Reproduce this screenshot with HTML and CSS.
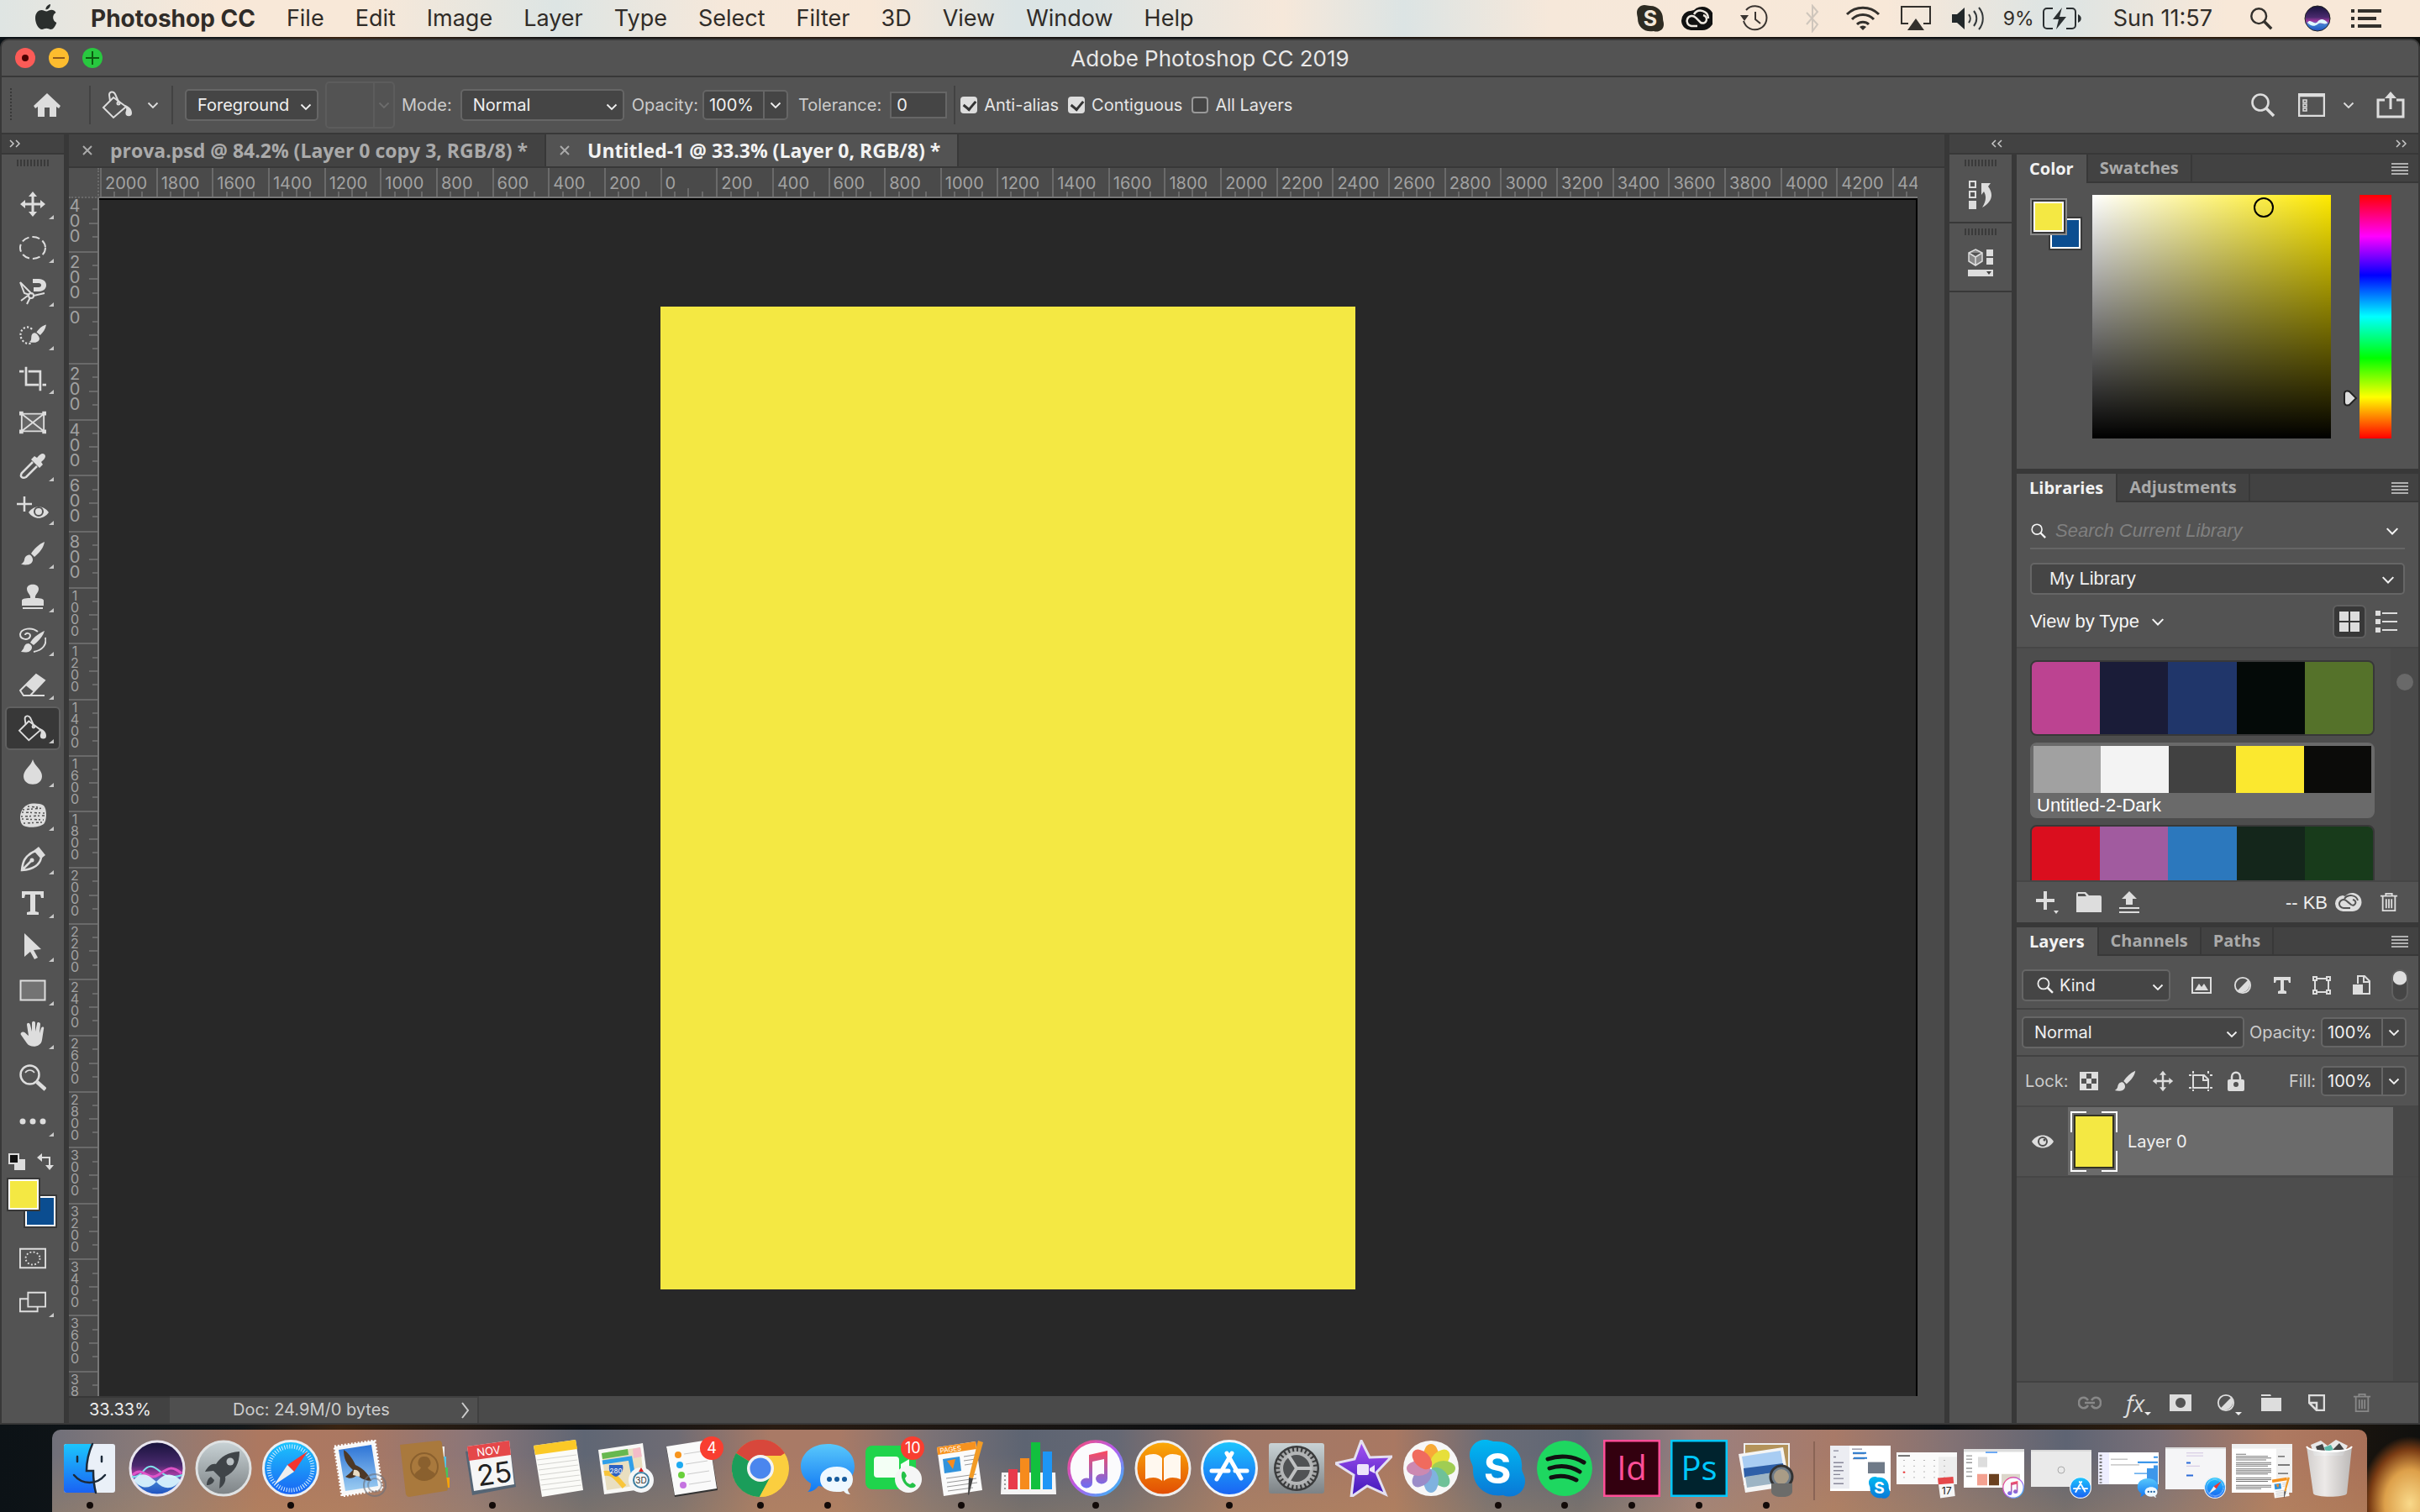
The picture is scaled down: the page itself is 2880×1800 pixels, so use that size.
FILE: index.html
```html
<!DOCTYPE html>
<html lang="en">
<head>
<meta charset="utf-8">
<title>Adobe Photoshop CC 2019</title>
<link rel="stylesheet" href="styles.css">
</head>
<body>
<svg class="sprite" aria-hidden="true">
  <defs>
    <linearGradient id="g-blue" x1="0" y1="0" x2="0" y2="1"><stop offset="0" stop-color="#1cc6fd"/><stop offset="1" stop-color="#1a62f3"/></linearGradient>
    <linearGradient id="g-bubble" x1="0" y1="0" x2="0" y2="1"><stop offset="0" stop-color="#59c8fb"/><stop offset="1" stop-color="#1279f4"/></linearGradient>
    <linearGradient id="g-orange" x1="0" y1="0" x2="0" y2="1"><stop offset="0" stop-color="#fbab08"/><stop offset="1" stop-color="#e14c04"/></linearGradient>
    <linearGradient id="g-silver" x1="0" y1="0" x2="0" y2="1"><stop offset="0" stop-color="#c9d3d6"/><stop offset="1" stop-color="#7d8285"/></linearGradient>
    <linearGradient id="g-pink" x1="0" y1="0" x2="1" y2="1"><stop offset="0" stop-color="#fb4a6c"/><stop offset=".5" stop-color="#b45cf0"/><stop offset="1" stop-color="#23c5f7"/></linearGradient>
    <linearGradient id="g-note" x1="0" y1="0" x2="0" y2="1"><stop offset="0" stop-color="#fb4a5e"/><stop offset="1" stop-color="#6b6df6"/></linearGradient>
    <linearGradient id="g-star" x1="0" y1="0" x2="0" y2="1"><stop offset="0" stop-color="#a855f5"/><stop offset="1" stop-color="#3d16b8"/></linearGradient>
    <linearGradient id="g-sky" x1="0" y1="0" x2="0" y2="1"><stop offset="0" stop-color="#2d74d6"/><stop offset="1" stop-color="#9ccdf2"/></linearGradient>
    <linearGradient id="g-skype" x1="0" y1="0" x2="0" y2="1"><stop offset="0" stop-color="#00b9f2"/><stop offset="1" stop-color="#0a78d6"/></linearGradient>
    <linearGradient id="g-bin" x1="0" y1="0" x2="1" y2="0"><stop offset="0" stop-color="#d4d4d4"/><stop offset=".4" stop-color="#f1f1f1"/><stop offset="1" stop-color="#bdbdbd"/></linearGradient>
    <linearGradient id="g-night" x1="0" y1="0" x2="0" y2="1"><stop offset="0" stop-color="#16123a"/><stop offset=".45" stop-color="#4a2a6e"/><stop offset=".6" stop-color="#a0389e"/><stop offset=".75" stop-color="#3f7fd0"/><stop offset="1" stop-color="#1d4fc0"/></linearGradient>
  </defs>
  <symbol id="chev" viewBox="0 0 14 14"><path d="M1.500 4.500 7 10l5.500-5.500" fill="none" stroke="currentColor" stroke-width="1.800"/></symbol>
  <symbol id="lens" viewBox="0 0 32 32"><circle cx="13" cy="13" r="9.500" fill="none" stroke="currentColor" stroke-width="2.600"/><path d="m20 20 9 9" stroke="currentColor" stroke-width="3.600"/></symbol>
  <symbol id="burger" viewBox="0 0 20 14"><path d="M0 1h20M0 5h20M0 9h20M0 13h20" stroke="currentColor" stroke-width="2"/></symbol>
  <symbol id="bin" viewBox="0 0 24 26"><path d="M1 5h22M8 5V2h8v3M4 6v18h16V6M8.500 9v12M12 9v12M15.500 9v12" fill="none" stroke="currentColor" stroke-width="2"/></symbol>
  <symbol id="move" viewBox="0 0 32 32"><path d="M16 1l5 6h-3.500v7.500H25V11l6 5-6 5v-3.500h-7.500V25H21l-5 6-5-6h3.500v-7.500H7V21l-6-5 6-5v3.500h7.500V7H11z" fill="currentColor"/></symbol>
  <symbol id="brush" viewBox="0 0 32 32"><path d="M30 2c-7 3-12 8-16 14l4 4C24 15 29 9 30 2zM12.500 17.500c-4 0-6 2.500-6.500 6-.4 2.500-2 4-4 5 6 2 13 1 14-4.500 .3-2-1-5.500-3.500-6.500z" fill="currentColor"/></symbol>
  <symbol id="bucket" viewBox="0 0 38 34"><g fill="none" stroke="currentColor" stroke-width="2"><path d="m14 8 15 11-15 13L2 20z"/><path d="M10 12 9 5c0-4 5-5 7-1l4 9"/><circle cx="20" cy="15" r="1.500"/></g><path d="M28 17c5 2 8 5 8 9.500a3.800 3.800 0 0 1-7.600 0c0-2 2-3.500 0-7z" fill="currentColor"/></symbol>
  <symbol id="half" viewBox="0 0 24 24"><circle cx="12" cy="12" r="10" fill="none" stroke="currentColor" stroke-width="2"/><path d="M19 5a10 10 0 0 1-14 14z" fill="currentColor"/></symbol>
  <symbol id="cloud" viewBox="0 0 34 24"><path d="M11 4a9 9 0 1 0 1 19h11A11 11 0 1 0 14 5z" fill="currentColor"/><g fill="none" stroke="#535353" stroke-width="2"><path d="M20 19h-8a5 5 0 1 1 3-9l6 5c5 3 8-5 2-6"/><path d="M13 8c4-6 14-5 16 2"/></g></symbol>
  <symbol id="grip" viewBox="0 0 38 8"><path d="M1 0v8M5 0v8M9 0v8M13 0v8M17 0v8M21 0v8M25 0v8M29 0v8M33 0v8M37 0v8" stroke="#3a3a3a" stroke-width="2"/></symbol>
  <symbol id="app-store" viewBox="0 0 68 68"><circle cx="34" cy="34" r="32.500" fill="url(#g-blue)" stroke="#f0f4f8" stroke-width="3"/><g stroke="#fff" stroke-linecap="round" stroke-width="5"><path d="M31 16l17 30M37 16 19 47M13 37h20M41 37h14" /></g></symbol>
  <symbol id="safari" viewBox="0 0 68 68"><circle cx="34" cy="34" r="32.500" fill="url(#g-blue)" stroke="#eceff2" stroke-width="3"/><circle cx="34" cy="34" r="26" fill="none" stroke="#d5efff" stroke-width="5" stroke-dasharray="1 2"/><path d="M54 14 38 38l-8-8z" fill="#f5352f"/><path d="M14 54l16-24 8 8z" fill="#eee"/></symbol>
  <symbol id="itunes" viewBox="0 0 68 68"><circle cx="34" cy="34" r="32" fill="#fbfbfd" stroke="url(#g-pink)" stroke-width="3.500"/><path d="M26 18l22-5v33a7 6 0 1 1-4-5V23l-14 3v25a7 6 0 1 1-4-5z" fill="url(#g-note)"/></symbol>
  <symbol id="messages" viewBox="0 0 68 68"><path d="M34 5C16 5 2 16 2 32c0 9 5 16 12 20 0 5-1 8-4 10 6 0 10-3 13-7 24 5 43-6 43-23S52 5 34 5z" fill="url(#g-bubble)"/><path d="M45 32c-12 0-20 6-20 15s8 15 20 15c3 0 6 0 8-1 2 3 5 4 8 4-2-2-3-4-3-6 4-3 6-7 6-12 0-9-8-15-19-15z" fill="#eef8ff"/><g fill="#155a9c"><circle cx="36" cy="47" r="3"/><circle cx="45" cy="47" r="3"/><circle cx="54" cy="47" r="3"/></g></symbol>
  <symbol id="skype" viewBox="0 0 68 68"><path d="M18 0c6 0 8 2 12 2 20-1 34 14 32 32 0 5 4 8 4 15 0 15-15 22-26 17C20 69 3 56 4 34 4 29 0 26 0 18 0 8 8 0 18 0z" fill="url(#g-skype)"/></symbol>
  <symbol id="pages" viewBox="0 0 68 68"><path d="M5 9 51 2l8 58-46 7z" fill="#fbfbfb"/><path d="M5 9 51 2l1 9-46 7z" fill="#f6921e"/><path d="m12 23 20-3 2 17-20 3z" fill="#3293dc"/><path d="m17 25 10-2-3 12z" fill="#f68b1f"/><path d="m37 20 13-2M37 25l14-2M38 30l13-2M16 46l36-5M17 51l35-5M17 56l36-5M18 61l30-4" stroke="#999"/><path d="M54 1l6 2-12 43-5-1z" fill="#f29b25"/><path d="m43 45 5 1-5 20-1-1z" fill="#444"/></symbol>
</svg>

<header class="menubar">
  <svg class="apple" viewBox="0 0 26 32"><path d="M18 1c.3 3-2.500 6.500-5.500 6.500C12 4.500 15 1.300 18 1zM24.500 11c-5 3-4 10 .8 12-1.600 4.500-4 8-6.800 8-2 0-3-1.200-5.200-1.200S9.800 31 8 31C4 31 0 24 0 17.500 0 11 4 8 7.500 8c2.300 0 4.200 1.500 5.700 1.500S17 7.800 19.500 7.800c1.800 0 3.800 1 5 3.200z" fill="#2b2f2d"/></svg>
  <nav class="menus">
    <a href="#" class="app-name">Photoshop CC</a><a href="#">File</a><a href="#">Edit</a><a href="#">Image</a><a href="#">Layer</a><a href="#">Type</a><a href="#">Select</a><a href="#">Filter</a><a href="#">3D</a><a href="#">View</a><a href="#">Window</a><a href="#">Help</a>
  </nav>
  <div class="status">
    <svg width="32" height="32" viewBox="0 0 32 32"><path d="M9 0c3 0 4 1 7 1 9 0 15 7 15 15 0 3 1 4 1 7 0 7-7 10-12 8C9 33 1 26 1 16 1 14 0 12 0 9c0-5 4-9 9-9z" fill="#2e2b22"/><text x="16" y="25" text-anchor="middle" font-family="Inter, sans-serif" font-size="25" font-weight="700" fill="#f4e8da">S</text></svg>
    <svg class="cc" width="38" height="30" viewBox="0 0 38 30"><path d="M12 6a11 11 0 1 0 1 23h12A14 14 0 1 0 16 5z" fill="#111"/><g fill="none" stroke="#eee8e0" stroke-width="2.500"><path d="M20 24h-7a6 6 0 1 1 5-10l6 6c7 3 10-7 3-9"/><path d="M16 10c5-8 17-4 17 5"/></g></svg>
    <svg width="36" height="34" viewBox="0 0 36 34"><path d="M5 20A14 14 0 1 0 8 7M19 9v9l6 5" fill="none" stroke="#3a3430" stroke-width="2"/><path d="M1 13h10l-5 7z" fill="#3a3430"/></svg>
    <svg class="bt" width="18" height="34" viewBox="0 0 18 34"><path d="M2 10l13 14-6 8V2l6 7L2 24" fill="none" stroke="#cfc6bc" stroke-width="2"/></svg>
    <svg width="42" height="30" viewBox="0 0 42 30"><g fill="none" stroke="#33302c" stroke-width="3"><path d="M2 10a27 27 0 0 1 38 0M8 16a18 18 0 0 1 26 0M14 22a10 10 0 0 1 14 0"/></g><path d="M21 29l-4-4a6 6 0 0 1 8 0z" fill="#33302c"/></svg>
    <svg width="36" height="30" viewBox="0 0 36 30"><path d="M9 21H1V1h34v20h-8" fill="none" stroke="#33302c" stroke-width="2"/><path d="M18 15l10 14H8z" fill="#33302c"/></svg>
    <svg width="42" height="32" viewBox="0 0 42 32"><path d="M1 11h6l9-8v26l-9-8H1z" fill="#22282a"/><g fill="none" stroke="#33383a" stroke-width="2"><path d="M21 11a8 8 0 0 1 0 10M27 7a14 14 0 0 1 0 18M33 3a20 20 0 0 1 0 26"/></g></svg>
    <span class="pct">9%</span>
    <svg width="46" height="26" viewBox="0 0 46 26"><path d="M12 1H5a4 4 0 0 0-4 4v16a4 4 0 0 0 4 4h7M28 1h7a4 4 0 0 1 4 4v16a4 4 0 0 1-4 4h-7" fill="none" stroke="#2b3032" stroke-width="2"/><path d="M42 8c5 2 5 8 0 10zM23 0 12 14h7l-3 12 12-15h-8z" fill="#2b3032"/></svg>
    <span class="clock">Sun 11:57</span>
    <svg width="30" height="30"><use href="#lens" color="#33302c"/></svg>
    <svg class="siri-mini" width="32" height="32" viewBox="0 0 32 32"><circle cx="16" cy="16" r="15" fill="url(#g-night)" stroke="#222"/><path d="M4 21c4-6 8 4 12-1s8-3 12 1c-4 4-7-2-12 2-4 3-8 2-12-2z" fill="#e0f8ff"/></svg>
    <svg width="36" height="24" viewBox="0 0 36 24"><path d="M0 3h4M8 3h28M0 12h4M8 12h22M0 21h4M8 21h28" stroke="#33302c" stroke-width="4"/></svg>
  </div>
</header>

<main class="window">
  <div class="titlebar">
    <div class="lights">
      <button class="light close" aria-label="Close"><svg viewBox="0 0 24 24"><circle cx="12" cy="12" r="4" fill="#4d0000"/></svg></button>
      <button class="light min" aria-label="Minimise"><svg viewBox="0 0 24 24"><path d="M5 12h14" stroke="#8f591d" stroke-width="2"/></svg></button>
      <button class="light max" aria-label="Zoom"><svg viewBox="0 0 24 24"><path d="M4 12h16M12 4v16" stroke="#0b5c10" stroke-width="2"/></svg></button>
    </div>
    <h1>Adobe Photoshop CC 2019</h1>
  </div>

  <div class="options">
    <i class="dots"></i>
    <button class="ico home" aria-label="Home"><svg width="32" height="28" viewBox="0 0 32 28"><path d="M16 0l16 15-2 3-3-2v12h-8V17h-6v11H5V16l-3 2-2-3z" fill="currentColor"/></svg></button>
    <i class="rule"></i>
    <button class="ico tool-preset" aria-label="Paint bucket preset"><svg width="38" height="34"><use href="#bucket"/></svg><svg width="14" height="14"><use href="#chev"/></svg></button>
    <i class="rule"></i>
    <span class="pick w-fore"><select aria-label="Fill source"><option>Foreground</option></select><svg><use href="#chev"/></svg></span>
    <span class="pattern"><i></i><svg width="14" height="14"><use href="#chev"/></svg></span>
    <label for="mode">Mode:</label>
    <span class="pick w-mode"><select id="mode"><option>Normal</option></select><svg><use href="#chev"/></svg></span>
    <label for="op">Opacity:</label>
    <span class="combo"><input id="op" value="100%"><button aria-label="Opacity slider"><svg width="14" height="14"><use href="#chev"/></svg></button></span>
    <label for="tol" class="tol-label">Tolerance:</label>
    <input id="tol" class="tol" value="0">
    <i class="rule slim"></i>
    <label class="check"><input type="checkbox" checked>Anti-alias</label>
    <label class="check"><input type="checkbox" checked>Contiguous</label>
    <label class="check"><input type="checkbox">All Layers</label>
    <div class="options-end">
      <button class="ico" aria-label="Search"><svg width="32" height="32"><use href="#lens"/></svg></button>
      <button class="ico ws" aria-label="Workspace"><svg width="32" height="28" viewBox="0 0 32 28"><path d="M1 1h30v26H1zM1 3h30" fill="none" stroke="currentColor" stroke-width="2.500"/><path d="M6 8h4v3H6zM6 13h4v3H6zM6 18h4v3H6z" fill="none" stroke="currentColor" stroke-width="1.500"/></svg><svg width="14" height="14"><use href="#chev"/></svg></button>
      <button class="ico" aria-label="Share"><svg width="34" height="32" viewBox="0 0 34 32"><path d="M10 10H2v20h30V10h-8M17 21V5" fill="none" stroke="currentColor" stroke-width="3"/><path d="M17 0l7 8H10z" fill="currentColor"/></svg></button>
    </div>
  </div>

  <div class="work">
    <aside class="toolbox">
      <div class="strip-head"><svg width="14" height="10" viewBox="0 0 14 10"><path d="M1 1l4 4-4 4M8 1l4 4-4 4" fill="none" stroke="#c8c8c8" stroke-width="1.500"/></svg></div>
      <svg class="tool-grip" width="38" height="8"><use href="#grip"/></svg>
      <div class="tools">
        <button class="tool more" aria-label="Move"><svg width="30" height="30"><use href="#move"/></svg></button>
        <button class="tool more" aria-label="Marquee"><svg viewBox="0 0 32 32"><ellipse cx="16" cy="16" rx="15" ry="13" fill="none" stroke="currentColor" stroke-width="2" stroke-dasharray="9 4"/></svg></button>
        <button class="tool more" aria-label="Lasso"><svg viewBox="0 0 32 32"><path d="M1 5l14 14M1 5l5 13 6 2M30 18l-13 3M13 23l-4 8M10 21l-8 6" fill="none" stroke="currentColor" stroke-width="2"/><circle cx="14" cy="21" r="3" fill="none" stroke="currentColor" stroke-width="2"/><path d="M16 1h7c12 0 12 15 0 15h-6v-5h6c4 0 4-5 0-5h-7z" fill="currentColor"/></svg></button>
        <button class="tool more" aria-label="Quick selection"><svg viewBox="0 0 36 32"><path d="M17 8C8 0-2 11 3 21c3 6 10 8 14 5" fill="none" stroke="currentColor" stroke-width="2.500" stroke-dasharray="2.500 2.500"/><path d="M36 2c-5 1-9 5-13 10l5 4c4-4 7-8 8-14zM21 13c-3 0-5 2-5 6 0 4-1 5-3 6 6 2 13 1 14-4 0-3-3-7-6-8z" fill="currentColor"/></svg></button>
        <button class="tool more" aria-label="Crop"><svg viewBox="0 0 36 32"><path d="M9 0v24h17M0 6h6M12 6h16v26M31 24h5" fill="none" stroke="currentColor" stroke-width="3"/></svg></button>
        <button class="tool" aria-label="Frame"><svg viewBox="0 0 34 28"><path d="M3 3h28v22H3zM3 3l28 22M31 3 3 25" fill="#666" stroke="currentColor" stroke-width="2"/><path d="M0 0h5v5H0zM29 0h5v5h-5zM0 23h5v5H0zM29 23h5v5h-5z" fill="currentColor"/></svg></button>
        <button class="tool more" aria-label="Eyedropper"><svg viewBox="0 0 32 32"><path d="M18 4l3 2c4-5 7-6 9-4s1 5-4 9l2 3-4 4-10-10z" fill="currentColor"/><path d="M16 11 3 24c-3 5 1 7 5 5l13-13" fill="none" stroke="currentColor" stroke-width="2.500"/></svg></button>
        <button class="tool more" aria-label="Red eye"><svg class="wide" viewBox="0 0 38 32"><path d="M0 9h18M9 0v18" stroke="currentColor" stroke-width="2.500"/><path d="M14 19c6-9 18-9 24 0-6 9-18 9-24 0z" fill="currentColor"/><circle cx="26" cy="18" r="5" fill="none" stroke="#535353" stroke-width="2"/></svg></button>
        <button class="tool more" aria-label="Brush"><svg><use href="#brush"/></svg></button>
        <button class="tool more" aria-label="Stamp"><svg viewBox="0 0 32 32"><path d="M3 26v-6c0-2 3-3 10-3 1-4-4-6-4-11 0-7 14-7 14 0 0 5-5 7-4 11 7 0 10 1 10 3v6zM4 28h24v2H4z" fill="currentColor"/></svg></button>
        <button class="tool more" aria-label="History brush"><svg viewBox="0 0 32 32"><path d="M30 4C24 7 17 11 13 18l4 3C23 16 28 11 30 4zM11 19c-4 0-5 3-6 6l-3 4c6 1 12 1 13-5 0-2-1-4-4-5z" fill="currentColor"/><path d="M22 5C15-1 2 1 1 8c0 7 11 8 12 2 0-4-6-4-6-1M31 12c2 8-3 15-14 17" fill="none" stroke="currentColor" stroke-width="2"/></svg></button>
        <button class="tool more" aria-label="Eraser"><svg viewBox="0 0 32 32"><path d="M1 23 20 4l10 7-17 18H5zM8 16l10 8" fill="none" stroke="currentColor" stroke-width="2"/><path d="M20 4l10 7-12 13L8 16zM6 28h24v2H6z" fill="currentColor"/></svg></button>
        <button class="tool more on" aria-label="Paint bucket"><svg class="wide" viewBox="0 0 38 34"><use href="#bucket"/></svg></button>
        <button class="tool more" aria-label="Blur"><svg viewBox="0 0 32 32"><path d="M16 1c2 8 11 12 11 20 0 13-22 13-22 0C5 13 14 9 16 1z" fill="currentColor"/></svg></button>
        <button class="tool more" aria-label="Sponge"><svg viewBox="0 0 32 32"><path d="M10 3c5-2 14-2 19 1 4 4 4 18 0 22-5 4-18 5-24 2C-1 24-1 8 10 3z" fill="currentColor"/><path d="M4 9l25-2M3 12l27 1M2 17l28-1M3 20l26 1M5 25l22-1M10 5l12 1" stroke="#535353" stroke-width="1.500" stroke-dasharray="2 3 3 2"/></svg></button>
        <button class="tool more" aria-label="Pen"><svg viewBox="0 0 32 32"><path d="M3 29C4 19 6 12 19 6l7 8C24 24 16 28 3 29zM3 29l12-12" fill="none" stroke="currentColor" stroke-width="2.500"/><circle cx="15" cy="17" r="2.500" fill="currentColor"/><path d="M18 5l5-4 8 10-5 4z" fill="currentColor"/></svg></button>
        <button class="tool more" aria-label="Type"><svg viewBox="0 0 32 32"><path d="M3 2h26v8h-3l-1-4h-6v20l4 1v3H9v-3l4-1V6H7l-1 4H3z" fill="currentColor"/></svg></button>
        <button class="tool more" aria-label="Path selection"><svg viewBox="0 0 32 32"><path d="M6 0l20 19-9 1 5 9-4 2-5-9-7 6z" fill="currentColor"/></svg></button>
        <button class="tool more" aria-label="Rectangle"><svg viewBox="0 0 32 32"><path d="M1.500 4.500h29v23h-29z" fill="#737373" stroke="currentColor" stroke-width="2"/></svg></button>
        <button class="tool more" aria-label="Hand"><svg viewBox="0 0 32 32"><path d="M3 14c3-2 6 3 8 4L9 5c0-3 3-3 4 0l2 8V3c0-3 4-3 4 0v10l2-9c0-3 4-2 4 0l-1 11 2-6c1-2 4-2 3 1l-2 13c-1 9-14 10-18 4L2 17c-1-1 0-3 1-3z" fill="currentColor"/></svg></button>
        <button class="tool" aria-label="Zoom"><svg viewBox="0 0 32 32"><circle cx="12.500" cy="12.500" r="11" fill="none" stroke="currentColor" stroke-width="2.500"/><path d="m21 21 10 9" stroke="currentColor" stroke-width="4.500"/><path d="M7 10c3-4 8-4 11 0" fill="none" stroke="currentColor" stroke-width="1.500"/></svg></button>
        <button class="tool more" aria-label="Edit toolbar"><svg viewBox="0 0 32 32"><circle cx="4" cy="16" r="3.500"/><circle cx="16" cy="16" r="3.500"/><circle cx="28" cy="16" r="3.500"/></svg></button>
      </div>
      <div class="swap">
        <svg width="20" height="20" viewBox="0 0 20 20"><path d="M7 7h13v13H7z" fill="#ddd"/><path d="M1 1h11v11H1z" fill="#111" stroke="#ddd" stroke-width="2"/></svg>
        <svg width="20" height="20" viewBox="0 0 20 20"><path d="M5 5h10v10" fill="none" stroke="#ddd" stroke-width="2"/><path d="M6 0v10L0 5zM10 14h10l-5 6z" fill="#ddd"/></svg>
      </div>
      <div class="swatches"><button class="sw back" aria-label="Background colour"></button><button class="sw fore" aria-label="Foreground colour"></button></div>
      <div class="tools modes">
        <button class="tool" aria-label="Quick mask"><svg viewBox="0 0 34 28"><path d="M1 2h32v24H1z" fill="none" stroke="currentColor" stroke-width="2"/><ellipse cx="17" cy="14" rx="9" ry="8" fill="none" stroke="currentColor" stroke-width="2" stroke-dasharray="2 2.500"/></svg></button>
        <button class="tool more" aria-label="Screen mode"><svg viewBox="0 0 34 28"><path d="M1 10h22v16H1z" fill="none" stroke="currentColor" stroke-width="2"/><path d="M11 2h22v18H11z" fill="#535353" stroke="currentColor" stroke-width="2"/></svg></button>
      </div>
    </aside>

    <section class="doc">
      <div class="doc-tabs">
        <div class="doc-tab"><button aria-label="Close tab"><svg width="14" height="14" viewBox="0 0 14 14"><path d="m2 2 10 10M12 2 2 12" stroke="currentColor" stroke-width="2"/></svg></button>prova.psd @ 84.2% (Layer 0 copy 3, RGB/8) *</div>
        <div class="doc-tab active"><button aria-label="Close tab"><svg width="14" height="14" viewBox="0 0 14 14"><path d="m2 2 10 10M12 2 2 12" stroke="currentColor" stroke-width="2"/></svg></button>Untitled-1 @ 33.3% (Layer 0, RGB/8) *</div>
      </div>
      <div class="view">
        <div class="corner"></div>
        <div class="ruler-x"><span>2000</span><span>1800</span><span>1600</span><span>1400</span><span>1200</span><span>1000</span><span>800</span><span>600</span><span>400</span><span>200</span><span>0</span><span>200</span><span>400</span><span>600</span><span>800</span><span>1000</span><span>1200</span><span>1400</span><span>1600</span><span>1800</span><span>2000</span><span>2200</span><span>2400</span><span>2600</span><span>2800</span><span>3000</span><span>3200</span><span>3400</span><span>3600</span><span>3800</span><span>4000</span><span>4200</span><span>4400</span></div>
        <div class="ruler-y"><div class="track"><span>400</span><span>200</span><span>0</span><span>200</span><span>400</span><span>600</span><span>800</span><span class="k">1000</span><span class="k">1200</span><span class="k">1400</span><span class="k">1600</span><span class="k">1800</span><span class="k">2000</span><span class="k">2200</span><span class="k">2400</span><span class="k">2600</span><span class="k">2800</span><span class="k">3000</span><span class="k">3200</span><span class="k">3400</span><span class="k">3600</span><span class="k">3800</span></div></div>
        <div class="canvas"><div class="artboard"></div></div>
      </div>
      <div class="doc-foot">
        <span class="zoom">33.33%</span>
        <span class="info">Doc: 24.9M/0 bytes</span>
        <button aria-label="Status menu"><svg width="12" height="20" viewBox="0 0 12 20"><path d="M2 1l7 9-7 9" fill="none" stroke="currentColor" stroke-width="2"/></svg></button>
      </div>
    </section>

    <aside class="right">
      <div class="strip-head both">
        <svg width="14" height="10" viewBox="0 0 14 10"><path d="M6 1 2 5l4 4M13 1 9 5l4 4" fill="none" stroke="#c8c8c8" stroke-width="1.500"/></svg>
        <svg width="14" height="10" viewBox="0 0 14 10"><path d="M1 1l4 4-4 4M8 1l4 4-4 4" fill="none" stroke="#c8c8c8" stroke-width="1.500"/></svg>
      </div>
      <div class="mini">
        <div class="mini-cell"><svg width="38" height="8"><use href="#grip"/></svg><button class="ico" aria-label="History"><svg width="30" height="36" viewBox="0 0 30 36"><path d="M2 2h7v7H2zM2 14h7v7H2z" fill="none" stroke="currentColor" stroke-width="2"/><path d="M1 25h9v10H1zM16 4h11l-3 4c7 9 5 18-7 25 5-8 5-14 2-19l-3 4z" fill="currentColor"/></svg></button></div>
        <div class="mini-cell"><svg width="38" height="8"><use href="#grip"/></svg><button class="ico" aria-label="3D properties"><svg width="30" height="34" viewBox="0 0 30 34"><path d="M9 1l8 4v10l-8 5-8-5V5zM1 5l8 5 8-5M9 10v10" fill="#888" stroke="currentColor" stroke-width="1.500"/><path d="M22 1h8v8h-8zM22 11h8v8h-8zM0 25h30v8H0z" fill="currentColor"/><path d="M22 27h6l-3 4z" fill="#444"/></svg></button></div>
        <div class="mini-rest"></div>
      </div>
      <div class="panels">
        <section class="panel color">
          <div class="tabs"><button class="active">Color</button><button>Swatches</button><svg class="burger" width="20" height="14"><use href="#burger"/></svg></div>
          <div class="color-body">
            <div class="swatches"><button class="sw back" aria-label="Background colour"></button><button class="sw fore ring" aria-label="Foreground colour"></button></div>
            <div class="field"><i></i></div>
            <div class="hue"><svg width="18" height="20" viewBox="0 0 18 20"><path d="M2 5c0-4 4-4 6-3l8 8-8 8c-2 1-6 1-6-3z" fill="#ddd" stroke="#222" stroke-width="2"/></svg></div>
          </div>
        </section>

        <section class="panel libs">
          <div class="tabs"><button class="active">Libraries</button><button>Adjustments</button><svg class="burger" width="20" height="14"><use href="#burger"/></svg></div>
          <div class="lib-top">
            <div class="lib-search"><svg width="20" height="20"><use href="#lens"/></svg><input type="search" aria-label="Search" placeholder="Search Current Library"><svg width="16" height="16"><use href="#chev"/></svg></div>
            <span class="pick lib-pick"><select aria-label="Library"><option>My Library</option></select><svg><use href="#chev"/></svg></span>
            <div class="lib-view"><button class="by-type">View by Type<svg width="16" height="16"><use href="#chev"/></svg></button>
              <button class="grid-btn" aria-label="Grid"><svg width="24" height="24" viewBox="0 0 24 24"><path d="M0 0h11v11H0zM13 0h11v11H13zM0 13h11v11H0zM13 13h11v11H13z" fill="currentColor"/></svg></button>
              <button class="list-btn" aria-label="List"><svg width="26" height="26" viewBox="0 0 26 26"><path d="M0 0h6v6H0zM0 10h6v6H0zM0 20h6v6H0zM8 2h18v2H8zM8 12h18v2H8zM8 22h18v2H8z" fill="currentColor"/></svg></button></div>
          </div>
          <div class="lib-list">
            <div class="themes">
              <div class="theme"><i class="c-magenta"></i><i class="c-navy"></i><i class="c-royal"></i><i class="c-ink"></i><i class="c-olive"></i></div>
              <div class="theme picked"><i class="c-grey"></i><i class="c-white"></i><i class="c-coal"></i><i class="c-yellow"></i><i class="c-black"></i><span>Untitled-2-Dark</span></div>
              <div class="theme"><i class="c-red"></i><i class="c-violet"></i><i class="c-sky"></i><i class="c-pine"></i><i class="c-forest"></i></div>
            </div>
            <div class="lib-scroll"><i></i></div>
          </div>
          <div class="lib-foot">
            <button class="ico" aria-label="Add"><svg width="28" height="28" viewBox="0 0 28 28"><path d="M12 1v22M1 12h22" stroke="currentColor" stroke-width="4"/><path d="M22 24h6l-3 4z" fill="currentColor"/></svg></button>
            <button class="ico" aria-label="New group"><svg width="30" height="24" viewBox="0 0 30 24"><path d="M0 2a2 2 0 0 1 2-2h9l4 4h13a2 2 0 0 1 2 2v18H0zM2 2v3h10l-2-3z" fill="currentColor" fill-rule="evenodd"/></svg></button>
            <button class="ico" aria-label="Upload"><svg width="24" height="26" viewBox="0 0 24 26"><path d="M12 0l9 9h-5v7H8V9H3zM0 19h24v2H0zM0 24h24v2H0z" fill="currentColor"/></svg></button>
            <span class="size">-- KB</span>
            <button class="ico" aria-label="Sync"><svg width="34" height="24"><use href="#cloud"/></svg></button>
            <button class="ico" aria-label="Delete"><svg width="22" height="24"><use href="#bin"/></svg></button>
          </div>
        </section>

        <section class="panel layers">
          <div class="tabs"><button class="active">Layers</button><button>Channels</button><button>Paths</button><svg class="burger" width="20" height="14"><use href="#burger"/></svg></div>
          <div class="row">
            <span class="pick w-kind"><svg class="kind-lens"><use href="#lens"/></svg><select aria-label="Filter kind"><option>Kind</option></select><svg><use href="#chev"/></svg></span>
            <div class="filters">
              <button class="ico" aria-label="Pixel"><svg width="24" height="20" viewBox="0 0 24 20"><path d="M1 1h22v18H1z" fill="none" stroke="currentColor" stroke-width="2"/><path d="M4 16l5-8 3 4 3-4 5 8z" fill="currentColor"/></svg></button>
              <button class="ico" aria-label="Adjustment"><svg width="22" height="22"><use href="#half"/></svg></button>
              <button class="ico" aria-label="Type"><svg width="20" height="20" viewBox="0 0 20 20"><path d="M0 0h20v7h-2l-1-3h-5v12l3 1v3H5v-3l3-1V4H3L2 7H0z" fill="currentColor"/></svg></button>
              <button class="ico" aria-label="Shape"><svg width="22" height="22" viewBox="0 0 22 22"><path d="M5 3h12M5 19h12M3 5v12M19 5v12M1 1h4v4H1zM17 1h4v4h-4zM1 17h4v4H1zM17 17h4v4h-4z" fill="none" stroke="currentColor" stroke-width="2"/></svg></button>
              <button class="ico" aria-label="Smart object"><svg width="22" height="24" viewBox="0 0 22 24"><path d="M6 10V1h8l6 6v15h-8M13 2v6h7" fill="none" stroke="currentColor" stroke-width="2"/><path d="M0 11h12v12H0z" fill="currentColor"/></svg></button>
            </div>
            <button class="toggle" aria-label="Filter on"></button>
          </div>
          <div class="row">
            <span class="pick w-blend"><select aria-label="Blend mode"><option>Normal</option></select><svg><use href="#chev"/></svg></span>
            <label for="lop">Opacity:</label>
            <span class="combo"><input id="lop" value="100%"><button aria-label="Opacity slider"><svg width="14" height="14"><use href="#chev"/></svg></button></span>
          </div>
          <div class="row lock-row">
            <span class="lock">Lock:</span>
            <button class="ico" aria-label="Lock transparency"><svg width="22" height="22" viewBox="0 0 22 22"><path d="M0 0h22v22H0zM2 8v6h6v6h6v-6h6V8h-6V2H8v6zM8 8h6v6H8z" fill="currentColor" fill-rule="evenodd"/></svg></button>
            <button class="ico" aria-label="Lock pixels"><svg width="28" height="28"><use href="#brush"/></svg></button>
            <button class="ico" aria-label="Lock position"><svg width="26" height="26"><use href="#move"/></svg></button>
            <button class="ico" aria-label="Lock artboard"><svg width="28" height="24" viewBox="0 0 28 24"><path d="M5 5h13l5 5v10H5zM17 5v6h6M0 5h3M25 5h3M0 20h3M25 20h3M5 0v3M23 0v3M5 22v2M23 22v2" fill="none" stroke="currentColor" stroke-width="2"/></svg></button>
            <button class="ico" aria-label="Lock all"><svg width="20" height="24" viewBox="0 0 20 24"><path d="M5 11V7c0-7 10-7 10 0v4" fill="none" stroke="currentColor" stroke-width="2.500"/><rect y="10" width="20" height="14" rx="2" fill="currentColor"/><circle cx="10" cy="16" r="3" fill="#535353"/></svg></button>
            <label for="fill" class="fill">Fill:</label>
            <span class="combo"><input id="fill" value="100%"><button aria-label="Fill slider"><svg width="14" height="14"><use href="#chev"/></svg></button></span>
          </div>
          <div class="layer-list">
            <div class="layer"><button class="ico eye" aria-label="Visibility"><svg width="26" height="16" viewBox="0 0 26 16"><path d="M0 8C6-2 20-2 26 8c-6 10-20 10-26 0z" fill="currentColor"/><circle cx="13" cy="8" r="5" fill="none" stroke="#4d4d4d" stroke-width="2"/><circle cx="15" cy="6" r="1.500" fill="#4d4d4d"/></svg></button>
              <div class="layer-main"><svg class="thumb" width="56" height="72" viewBox="0 0 56 72"><path d="M5 5h46v62H5z" fill="#f4e843" stroke="#333223" stroke-width="2"/><path d="M1 25V1h18M37 1h18v24M55 47v24H37M19 71H1V47" fill="none" stroke="#fff" stroke-width="2"/></svg><span>Layer 0</span></div></div>
          </div>
          <div class="layer-foot">
            <button class="ico dim" aria-label="Link"><svg width="28" height="16" viewBox="0 0 28 16"><path d="M12 5C8-1 1 2 1 8s7 9 11 3M16 5c4-6 11-3 11 3s-7 9-11 3M8 8h12" fill="none" stroke="currentColor" stroke-width="2.500"/></svg></button>
            <button class="ico fx" aria-label="Effects">fx<i></i></button>
            <button class="ico" aria-label="Mask"><svg width="26" height="20" viewBox="0 0 26 20"><path d="M0 0h26v20H0zM13 4a6 6 0 1 0 .1 0z" fill="currentColor" fill-rule="evenodd"/></svg></button>
            <button class="ico fx" aria-label="Adjustment layer"><svg width="22" height="22"><use href="#half"/></svg><i></i></button>
            <button class="ico" aria-label="Group"><svg width="24" height="20" viewBox="0 0 24 20"><path d="M0 0h11l1 2H0zM0 4h24v16H0z" fill="currentColor"/></svg></button>
            <button class="ico" aria-label="New layer"><svg width="20" height="20" viewBox="0 0 20 20"><path d="M1 10V1h18v18h-9zM1 10h9v9" fill="none" stroke="currentColor" stroke-width="2.500"/></svg></button>
            <button class="ico dim" aria-label="Delete layer"><svg width="22" height="24"><use href="#bin"/></svg></button>
          </div>
        </section>
      </div>
    </aside>
  </div>
</main>

<footer class="dock">
  <a href="#" class="app run" title="Finder"><svg viewBox="0 0 68 68"><rect x="3" y="5" width="61" height="58" rx="3" fill="#eaf0f8"/><path d="M6 5h31c-5 11-7 22-7 32h8c0 9 1 18 3 26H6a3 3 0 0 1-3-3V8a3 3 0 0 1 3-3z" fill="url(#g-blue)"/><path d="M19 20v6M48 20v6M15 42c10 12 27 12 37 0M37 5c-5 11-7 22-7 32h8c0 9 1 18 3 26" fill="none" stroke="#1c2a3a" stroke-width="2.500" stroke-linecap="round"/></svg></a>
  <a href="#" class="app" title="Siri"><svg viewBox="0 0 68 68"><circle cx="34" cy="34" r="32" fill="url(#g-night)" stroke="#e9e6ef" stroke-width="3"/><path d="M4 44c12 2 14-14 24-12s14 18 36 10" fill="none" stroke="#7fe0ea" stroke-width="2"/><path d="M5 42c12-12 18 8 30 0s16-12 28-2" fill="none" stroke="#e054c8" stroke-width="3"/><path d="M6 48c10-12 18-6 27 2 9-10 18-12 29-2-9 12-20 12-29 2-9 10-19 8-27-2z" fill="#dff8ff" opacity=".9"/></svg></a>
  <a href="#" class="app" title="Launchpad"><svg viewBox="0 0 68 68"><circle cx="34" cy="34" r="32" fill="url(#g-silver)" stroke="#dfe2e3" stroke-width="3"/><path d="M53 14c-14 1-22 6-28 15-5-1-9 2-13 9l10-1 8 8-1 13c6-4 8-9 7-14 12-6 17-16 17-30zM19 44c-4 2-5 7-5 10 4 0 8-2 9-6z" fill="#3f4448"/><circle cx="42" cy="26" r="4.500" fill="#b8bfc2"/></svg></a>
  <a href="#" class="app run" title="Safari"><svg><use href="#safari"/></svg></a>
  <a href="#" class="app" title="Mail"><svg viewBox="0 0 68 68"><path d="M6 8 54 1l9 58-48 8z" fill="#f7f7f7" stroke="#fff" stroke-width="3" stroke-dasharray="2 2"/><path d="m11 12 39-6 8 49-39 6z" fill="url(#g-sky)"/><path d="M17 12c5 3 10 9 14 18 7 3 14 8 19 19-7 0-13-3-17-7-4 4-9 5-14 2 3-2 6-5 9-8-8-7-11-14-11-24z" fill="#4d3826"/><path d="M29 36c5-1 8 3 7 8l-8-2z" fill="#e9dcc4"/><circle cx="54" cy="54" r="13" fill="none" stroke="#6b7079" stroke-width="2" opacity=".6"/><circle cx="54" cy="54" r="8" fill="none" stroke="#6b7079" stroke-width="2" opacity=".5"/></svg></a>
  <a href="#" class="app" title="Contacts"><svg viewBox="0 0 68 68"><path d="M52 8h5v12h-5z" fill="#eee"/><path d="M54 20h5v13h-5z" fill="#52c3e8"/><path d="M56 33h5v12h-5z" fill="#46c55a"/><path d="M57 45h6v12h-6z" fill="#f5a30a"/><path d="M4 6 50 1c3 0 4 2 4 4l7 52c0 3-1 4-3 4L15 68c-2 0-3-1-4-3z" fill="#a9793d"/><circle cx="33" cy="32" r="16" fill="none" stroke="#8a602e" stroke-width="2"/><path d="M33 20a7 7 0 0 1 4 13c1 4 8 4 9 9-7 7-18 7-25 1 1-6 7-6 8-10a7 7 0 0 1 4-13z" fill="#8a602e"/></svg></a>
  <a href="#" class="app run" title="Calendar"><svg viewBox="0 0 68 68"><path d="M2 14 54 5l8 51-52 10z" fill="#556575"/><path d="M4 8 54 1l6 52-48 8z" fill="#f6f6f6"/><path d="m4 8 50-7 2 17L6 25z" fill="#e5484a"/><g font-family="Inter, sans-serif" text-anchor="middle" transform="rotate(-8 32 32)"><text x="32" y="18" font-size="13" fill="#fff">NOV</text><text x="35" y="53" font-size="34" fill="#222">25</text></g></svg></a>
  <a href="#" class="app" title="Notes"><svg viewBox="0 0 68 68"><path d="M4 7 54 0l9 60-49 8z" fill="#fbfbf8"/><path d="M4 7 54 0l2 11L6 18z" fill="#fbc927"/><path d="m8 24 47-6M9 30l47-6M10 36l47-6M11 42l47-6M12 48l47-6M13 54l47-6M14 60l47-6" stroke="#d4d4d0"/></svg></a>
  <a href="#" class="app" title="Maps"><svg viewBox="0 0 68 68"><path d="M1 12 54 4l7 54-53 7z" fill="#f8f8f6"/><path d="m5 16 46-7 5 44-45 7z" fill="#e9dfc0"/><path d="m5 16 31-5 1 7-31 5z" fill="#67b84f"/><path d="m42 11 9-2 2 11-10 2z" fill="#f3bcc8"/><path d="M6 27l33-5 5 28" fill="none" stroke="#2f9fe8" stroke-width="5"/><path d="M8 40c10-2 15 6 24 16" fill="none" stroke="#f9c53a" stroke-width="6"/><path d="M14 30h16c2 8-3 12-8 14-6-2-9-6-8-14z" fill="#2e62c2"/><text x="22" y="40" font-size="8" font-family="Inter, sans-serif" fill="#fff" text-anchor="middle">280</text><circle cx="52" cy="48" r="15" fill="#f5f6f7"/><circle cx="52" cy="48" r="9" fill="none" stroke="#3d7ea1" stroke-width="2"/><path d="M52 33l3 5h-6z" fill="#d22"/><text x="52" y="52" font-size="10" font-family="Inter, sans-serif" fill="#333" text-anchor="middle">3D</text></svg></a>
  <a href="#" class="app" title="Reminders"><svg viewBox="0 0 68 68"><path d="m2 10 51-9 10 59-51 8z" fill="#333"/><path d="m2 8 51-8 9 58-50 8z" fill="#fafafa"/><g><circle cx="16" cy="18" r="4" fill="#f7941d"/><circle cx="18" cy="30" r="4" fill="#1eaaf1"/><circle cx="20" cy="42" r="4" fill="#69d03b"/><circle cx="22" cy="54" r="4" fill="#c573e0"/></g><path d="m23 17 26-4M25 29l26-4M27 41l26-4M29 53l26-4" stroke="#ccc"/></svg><b class="badge">4</b></a>
  <a href="#" class="app run" title="Chrome"><svg viewBox="0 0 68 68"><circle cx="34" cy="34" r="34" fill="#fbce3f"/><path d="M34 34 5 16a34 34 0 0 1 58 0z" fill="#d8473b"/><path d="M5 16a34 34 0 0 0 28 52l14-26-13-8z" fill="#1b9d5a"/><path d="M34 19h30a34 34 0 0 1-31 49l14-26z" fill="#fbce3f"/><circle cx="34" cy="34" r="16" fill="#f3f3f3"/><circle cx="34" cy="34" r="12.500" fill="#4a86ee"/></svg></a>
  <a href="#" class="app run" title="Messages"><svg><use href="#messages"/></svg></a>
  <a href="#" class="app" title="FaceTime"><svg viewBox="0 0 68 68"><rect y="7" width="60" height="52" rx="8" fill="#1fd44c"/><rect x="10" y="20" width="30" height="25" rx="4" fill="#f3fff5"/><path d="M42 29l10-6v18l-10-6z" fill="#f3fff5"/><circle cx="51" cy="47" r="16" fill="#f5f6f6"/><path d="M44 38c3-1 4 3 5 5l-2 3c1 4 3 6 6 7l3-2c3 2 5 3 3 5-8 6-20-10-15-18z" fill="#24c248"/></svg><b class="badge">10</b></a>
  <a href="#" class="app run" title="Pages"><svg viewBox="0 0 68 68"><use href="#pages"/><text x="9" y="16" font-family="Inter, sans-serif" font-size="8" fill="#fff" transform="rotate(-8 9 16)">PAGES</text></svg></a>
  <a href="#" class="app" title="Numbers"><svg viewBox="0 0 68 68"><path d="M2 39h64l1 26H1z" fill="#f4f4f4"/><path d="M6 42v20" stroke="#999" stroke-width="2" stroke-dasharray="2 3"/><rect x="10" y="35" width="11" height="24" fill="#e83b4c"/><rect x="24" y="22" width="11" height="37" fill="#f68b1c"/><rect x="37" y="3" width="11" height="56" fill="#12c03e"/><rect x="51" y="14" width="11" height="45" fill="#1e96f6"/></svg></a>
  <a href="#" class="app run" title="iTunes"><svg><use href="#itunes"/></svg></a>
  <a href="#" class="app" title="Books"><svg viewBox="0 0 68 68"><circle cx="34" cy="34" r="32" fill="url(#g-orange)" stroke="#eee" stroke-width="3"/><path d="M13 19c8-3 16-3 20 3v27c-5-5-13-5-20-2zM35 22c4-6 12-6 20-3v28c-7-3-15-3-20 2z" fill="#fff8ef"/></svg></a>
  <a href="#" class="app run" title="App Store"><svg><use href="#app-store"/></svg></a>
  <a href="#" class="app" title="System Preferences"><svg viewBox="0 0 68 68"><rect x="1" y="4" width="66" height="60" rx="3" fill="url(#g-silver)"/><circle cx="34" cy="34" r="27" fill="#3a3b3c"/><circle cx="34" cy="34" r="22" fill="none" stroke="#a3a5a6" stroke-width="5" stroke-dasharray="3 2"/><circle cx="34" cy="34" r="18" fill="#505254" stroke="#b3b5b6" stroke-width="4"/><path d="M34 34h18M34 34 24 18M34 34 24 50" stroke="#bfc1c2" stroke-width="4"/></svg></a>
  <a href="#" class="app" title="iMovie"><svg viewBox="0 0 68 68"><path d="m31 1 10 20 26-1-18 19 11 26-22-10-19 13 3-26L0 28l23-5z" fill="url(#g-star)" stroke="#e4e0f0" stroke-width="3"/><rect x="26" y="29" width="14" height="13" rx="2" fill="#ece4fb"/><path d="m41 34 6-4v10l-6-3z" fill="#ece4fb"/></svg></a>
  <a href="#" class="app" title="Photos"><svg viewBox="0 0 68 68"><circle cx="34" cy="34" r="33" fill="#f7f7f7"/><g opacity=".88"><ellipse cx="34" cy="19" rx="9" ry="14" fill="#f9a01c"/><ellipse cx="34" cy="19" rx="9" ry="14" fill="#e5dc22" transform="rotate(45 34 34)"/><ellipse cx="34" cy="19" rx="9" ry="14" fill="#95c83d" transform="rotate(90 34 34)"/><ellipse cx="34" cy="19" rx="9" ry="14" fill="#5dba8c" transform="rotate(135 34 34)"/><ellipse cx="34" cy="19" rx="9" ry="14" fill="#6fa9dc" transform="rotate(180 34 34)"/><ellipse cx="34" cy="19" rx="9" ry="14" fill="#8f7fc2" transform="rotate(225 34 34)"/><ellipse cx="34" cy="19" rx="9" ry="14" fill="#c77aa8" transform="rotate(270 34 34)"/><ellipse cx="34" cy="19" rx="9" ry="14" fill="#f0584a" transform="rotate(315 34 34)"/></g></svg></a>
  <a href="#" class="app run" title="Skype"><svg viewBox="0 0 68 68"><use href="#skype"/><text x="33" y="52" text-anchor="middle" font-family="Inter, sans-serif" font-size="50" font-weight="700" fill="#fff">S</text></svg></a>
  <a href="#" class="app run" title="Spotify"><svg viewBox="0 0 68 68"><circle cx="34" cy="34" r="33" fill="#1ed760"/><path d="M14 23c14-5 30-4 43 4M16 34c12-4 25-3 36 4M18 45c10-3 20-2 30 3" fill="none" stroke="#111" stroke-width="5" stroke-linecap="round"/></svg></a>
  <a href="#" class="app run" title="InDesign"><svg viewBox="0 0 68 68"><path d="M1 1h66v66H1z" fill="#33000f" stroke="#ff4f98" stroke-width="3"/><text x="34" y="48" font-size="40" font-family="'Open Sans', sans-serif" fill="#ff4f98" text-anchor="middle">Id</text></svg></a>
  <a href="#" class="app run" title="Photoshop"><svg viewBox="0 0 68 68"><path d="M1 1h66v66H1z" fill="#00232e" stroke="#00c8ff" stroke-width="3"/><text x="34" y="48" font-size="40" font-family="'Open Sans', sans-serif" fill="#00c8ff" text-anchor="middle">Ps</text></svg></a>
  <a href="#" class="app run" title="Preview"><svg viewBox="0 0 68 68"><path d="M8 5h53v48H8z" fill="#b3935a" stroke="#eee" stroke-width="2"/><path d="m1 17 53-8 8 46-53 8z" fill="#f5f5f5"/><path d="m5 20 46-7 3 18-46 7z" fill="#a9cdf3"/><path d="m7 34 47-6 1 9-47 8z" fill="#2e5fa8"/><path d="m9 44 46-7 2 13-46 7z" fill="#9db4c4"/><circle cx="52" cy="44" r="13" fill="#6d7a86" stroke="#333" stroke-width="3"/><circle cx="52" cy="44" r="9" fill="#a99c86"/><path d="M40 52h25v10a12 6 0 0 1-25 0z" fill="#6c6c6a"/></svg></a>
  <i class="dock-sep"></i>
  <a href="#" class="app win" title="Skype window"><svg class="shot" height="54" viewBox="0 0 72 80" preserveAspectRatio="none"><path d="M0 0h72v80H0z" fill="#fff"/><path d="M0 0h23v76H0z" fill="#ecedf2"/><path d="M4 9h6M4 20h3M4 30h12M4 37h10M4 44h12M4 51h8M4 58h12M4 67h12M26 6h12M27 14h14M27 23h14" stroke="#889" stroke-width="2"/><path d="M27 13h16M28 22h16" stroke="#2d7fd3" stroke-width="3"/><path d="M45 29h20v20H45z" fill="#6f7a88"/></svg><svg class="mini-badge" viewBox="0 0 68 68"><use href="#skype"/><text x="33" y="52" text-anchor="middle" font-family="Inter, sans-serif" font-size="50" font-weight="700" fill="#fff">S</text></svg></a>
  <a href="#" class="app win" title="Calendar window"><svg class="shot" height="38" viewBox="0 0 72 56" preserveAspectRatio="none"><path d="M0 0h72v56H0z" fill="#fafafa"/><path d="M50 8h22v48H50z" fill="#eee"/><path d="M2 6h14" stroke="#333" stroke-width="2"/><path d="M8 14h60M8 24h60M8 34h60M8 44h60" stroke="#aaa" stroke-dasharray="2 10"/><circle cx="9" cy="35" r="1.500" fill="#e33"/></svg><svg class="mini-badge" viewBox="0 0 68 68"><path d="M8 4 56 0l6 60-46 7z" fill="#f6f6f6"/><path d="m8 4 48-4 2 20-48 4z" fill="#e5484a"/><text x="36" y="56" font-size="32" font-family="Inter, sans-serif" text-anchor="middle" fill="#222">17</text></svg></a>
  <a href="#" class="app win" title="iTunes window"><svg class="shot" height="46" viewBox="0 0 72 68" preserveAspectRatio="none"><path d="M0 0h72v68H0z" fill="#fff"/><path d="M0 0h72v5H0z" fill="#ddd"/><path d="M26 6h14" stroke="#2d86f3" stroke-width="2"/><path d="M3 12h7M3 18h7M3 24h7M3 34h7M3 40h7M3 48h7" stroke="#999" stroke-width="2"/><path d="M17 14h11v18H17z" fill="#ddd"/><path d="M16 44h12v20H16z" fill="#f3a190"/><path d="M30 44h12v20H30z" fill="#6b4120"/><path d="M45 44h22v20H45z" fill="#dcd6ca"/></svg><svg class="mini-badge"><use href="#itunes"/></svg></a>
  <a href="#" class="app win" title="App Store window"><svg class="shot" height="44" viewBox="0 0 72 44"><path d="M0 0h72v44H0z" fill="#eaeaea"/><path d="M0 0h72v2H0z" fill="#d8d8d8"/><circle cx="36" cy="24" r="4" fill="none" stroke="#aaa"/></svg><svg class="mini-badge"><use href="#app-store"/></svg></a>
  <a href="#" class="app win" title="Messages window"><svg class="shot" height="38" viewBox="0 0 72 56" preserveAspectRatio="none"><path d="M0 0h72v56H0z" fill="#fff"/><path d="M0 0h13v56H0z" fill="#eef"/><path d="M3 4v50" stroke="#777" stroke-width="3" stroke-dasharray="3 3"/><path d="M15 12h20M15 22h34" stroke="#999"/><path d="M47 16h24v3H47zM66 7h5v3h-5zM43 36h15v-8h8v-5h5v33H58V38H43z" fill="#3d97ea"/></svg><svg class="mini-badge"><use href="#messages"/></svg></a>
  <a href="#" class="app win" title="Safari window"><svg class="shot" height="50" viewBox="0 0 72 74" preserveAspectRatio="none"><path d="M0 0h72v74H0z" fill="#f5f5f7"/><path d="M0 0h72v3H0z" fill="#ddd"/><path d="M25 10h20M25 15h20M25 33h16" stroke="#cbd"/><path d="M25 26h5v3h-5zM25 48h8v3h-8z" fill="#2b6bd8"/></svg><svg class="mini-badge"><use href="#safari"/></svg></a>
  <a href="#" class="app win" title="Pages window"><svg class="shot" height="58" viewBox="0 0 72 86" preserveAspectRatio="none"><path d="M0 0h72v86H0z" fill="#fff"/><path d="M0 0h72v8H0z" fill="#eee"/><path d="M5 18h12M5 22h38M5 25h42M5 28h36M5 33h42M5 36h42M5 39h38M5 44h42M5 47h42M5 50h42M5 53h38M5 60h42M5 63h42M5 66h38M5 73h42M5 76h42M5 79h30" stroke="#777" stroke-width="1.500"/><path d="M53 8h19v78H53z" fill="#f0f0f0"/><path d="M55 22h8M55 37h14M55 52h12" stroke="#555" stroke-width="2"/></svg><svg class="mini-badge"><use href="#pages"/></svg></a>
  <a href="#" class="app" title="Trash"><svg viewBox="0 0 68 68"><path d="m12 6 12-5 8 6 10-7 14 7-6 12H16z" fill="#e8e8e8"/><path d="m18 8 8-3 3 8-9 1zM38 12l8-8 6 8z" fill="#444"/><path d="m28 9 8-3 3 6-9 2z" fill="#5bb8a8"/><path d="M7 8c4 8 50 8 54 0l-6 56c-2 5-38 5-40 0z" fill="url(#g-bin)" opacity=".94"/><path d="M7 8c4 8 50 8 54 0" fill="none" stroke="#fff" stroke-width="2"/></svg></a>
</footer>
</body>
</html>
```
FILE: styles.css
```css
:root {
  --panel: #535353;
  --edge: #383838;
  --well: #454545;
  --bar: #424242;
  --line: #666;
  --ink: #ddd;
  --step: calc(200px / 3);
}

* { box-sizing: border-box; }

body {
  margin: 0;
  height: 100vh;
  display: flex;
  flex-direction: column;
  overflow: hidden;
  font: 20px/24px Inter, "Liberation Sans", sans-serif;
  color: var(--ink);
  background:
    radial-gradient(ellipse 60px 80px at calc(100% - 12px) calc(100% - 10px), #f9d98a 0, #dda04a 50%, #7a3c14 80%, transparent),
    linear-gradient(90deg, #0c1216, #14181a 10%, #3a2412 14%, #0e1114 24%, #2a1c12 32%, #0d1013 50%, #2c1c10 64%, #0d1013 80%, #33200f 90%, #10100e);
}

button, input, select { font: inherit; color: inherit; border: 0; background: none; padding: 0; margin: 0; border-radius: 0; outline: none; }
svg { display: block; flex: none; }
a { color: inherit; text-decoration: none; }
.sprite { position: absolute; width: 0; height: 0; }
.ico { display: flex; align-items: center; justify-content: center; color: var(--ink); }

/* system menu bar */
.menubar {
  flex: none;
  height: 44px;
  display: flex;
  align-items: center;
  padding: 0 46px 0 42px;
  font-size: 27px;
  line-height: 32px;
  color: #302c28;
  background: linear-gradient(90deg, #dfe5e3 0, #f8e8d8 9%, #f8e8d8 15%, #dde5e4 23%, #f6e8da 30%, #f8e8d8 36%, #dbe4e5 42%, #dce4e4 45%, #f6e8da 53%, #dce4e4 58%, #f6e8da 64%, #f8e8d8 78%, #dce4e4 85%, #f8e8d8 92%, #f8e8d8);
}
.apple { width: 26px; height: 32px; margin-bottom: 4px; }
.menus { display: flex; gap: 37px; margin-left: 40px; }
.app-name { font-size: 28px; font-weight: 700; }
.status { margin-left: auto; display: flex; align-items: center; gap: 24px; white-space: nowrap; }
.pct { margin: 0 -14px 0 -4px; font-size: 23px; }
.clock { margin: 0 19px 0 14px; }
.status .cc { margin: 0 8px 0 -4px; }
.status .bt { margin: 0 6px 0 18px; }
.siri-mini { margin-left: 12px; }

/* application window */
.window {
  flex: 1;
  min-height: 0;
  display: flex;
  flex-direction: column;
  margin-top: 2px;
  padding: 2px;
  gap: 2px;
  background: var(--edge);
  border-radius: 10px 10px 0 0;
}
.titlebar { flex: none; height: 42px; display: grid; grid-template-columns: 1fr auto 1fr; align-items: center; background: var(--panel); border-radius: 8px 8px 0 0; }
.lights { display: flex; gap: 16px; padding-left: 16px; }
.light { width: 24px; height: 24px; border-radius: 50%; }
.close { background: #fc5b57; }
.min { background: #fdbc2e; }
.max { background: #28c83f; }
h1 { margin: 2px 0 0; font-size: 26px; line-height: 32px; font-weight: 400; color: #e8e8e8; }

.options { flex: none; height: 66px; display: flex; align-items: center; background: var(--panel); padding: 0 16px 0 10px; white-space: nowrap; }
.options label { color: #ccc; }
.dots { width: 2px; height: 40px; background: repeating-linear-gradient(var(--edge) 0 2px, transparent 2px 4px); }
.home { margin: 0 34px 0 26px; }
.rule { width: 2px; height: 46px; background: #424242; }
.tool-preset { gap: 16px; margin: 0 15px 0 13px; }
.rule + .pick { margin-left: 14px; }

.pick { position: relative; display: flex; align-items: center; height: 38px; background: var(--well); border: 2px solid var(--line); border-radius: 5px; color: #f0f0f0; }
.pick select { appearance: none; width: 100%; height: 100%; padding-left: 13px; }
.pick > svg:last-child { position: absolute; right: 6px; top: 12px; width: 14px; height: 14px; pointer-events: none; }
.w-fore { width: 159px; }
.w-mode { width: 195px; margin: 0 9px 0 10px; }
.w-kind { width: 177px; }
.w-kind select { padding-left: 6px; }
.w-blend { width: 265px; }
.pattern { display: flex; align-items: center; justify-content: flex-end; gap: 4px; width: 83px; height: 56px; margin: 0 8px; padding-right: 4px; border: 2px solid #5c5c5c; border-radius: 5px; color: #6c6c6c; }
.pattern i { width: 2px; height: 52px; background: #5c5c5c; }
.combo { display: flex; width: 102px; height: 36px; background: var(--well); border: 2px solid var(--line); border-radius: 5px; color: #f0f0f0; }
.combo input { width: 70px; padding-left: 6px; }
.combo button { flex: 1; border-left: 2px solid var(--line); display: flex; align-items: center; justify-content: center; }
.options .combo { margin: 0 12px 0 5px; }
.tol { width: 68px; height: 32px; padding-left: 6px; margin: 0 8px 0 10px; background: var(--well); border: 2px solid var(--line); color: #eee; }
.check { display: flex; align-items: center; gap: 8px; margin-right: 11px; }
.options .check { color: #e6e6e6; }
.rule + .check { margin-left: 6px; }
.check input { appearance: none; width: 20px; height: 20px; border: 2px solid #999; border-radius: 4px; background: var(--well); }
.check input:checked { border: 0; background: #ddd; }
.check input:checked::before { content: ""; display: block; width: 7px; height: 11px; margin: 2px 6px; border: solid #333; border-width: 0 3px 3px 0; transform: rotate(40deg); }
.options-end { margin-left: auto; display: flex; gap: 26px; }
.ws { gap: 21px; }

.work { flex: 1; min-height: 0; display: grid; grid-template-columns: 74px minmax(0, 1fr) 558px; column-gap: 6px; }
.strip-head { flex: none; height: 22px; display: flex; align-items: center; padding: 0 9px; background: var(--bar); }

/* tools */
.toolbox { display: flex; flex-direction: column; background: var(--panel); }
.toolbox .strip-head { border-bottom: 2px solid var(--edge); height: 24px; }
.tool-grip { margin: 6px 0 19px 18px; }
.tools { display: flex; flex-direction: column; padding: 0 4px; }
.tool { position: relative; display: flex; align-items: center; justify-content: center; height: 52px; border: 2px solid transparent; border-radius: 6px; color: var(--ink); fill: currentColor; }
.tool svg { width: 32px; height: 32px; }
.tool .wide { width: 38px; }
.tool.on { background: var(--edge); border-color: #606060; }
.tool.more::after { content: ""; position: absolute; right: 6px; bottom: 6px; border: solid transparent; border-width: 0 0 5px 6px; border-bottom-color: #c8c8c8; }
.swap { display: flex; justify-content: space-between; padding: 12px 12px 9px 8px; }
.swatches { position: relative; width: 64px; height: 62px; flex: none; }
.toolbox .swatches { margin-left: 6px; }
.sw { position: absolute; width: 40px; height: 40px; border: 2px solid var(--edge); box-shadow: inset 0 0 0 2px #fff; }
.fore { left: 0; top: 0; background: #f4e843; }
.back { left: 20px; top: 20px; background: #0b4d90; }
.modes { margin-top: 8px; }

/* document */
.doc { display: flex; flex-direction: column; min-width: 0; min-height: 0; background: #4a4a4a; }
.doc-tabs { flex: none; display: flex; height: 40px; background: var(--bar); border-bottom: 2px solid var(--edge); }
.doc-tab { display: flex; align-items: center; gap: 20px; padding: 0 20px 0 15px; border-right: 2px solid var(--edge); color: #aaa; font-family: "Open Sans", sans-serif; font-weight: 700; font-size: 23px; white-space: nowrap; }
.doc-tab button { display: flex; }
.doc-tab.active { background: var(--panel); color: #f2f2f2; }
.doc-tab.active button { color: #aaa; }
.view { flex: 1; min-height: 0; display: grid; grid-template: 36px minmax(0, 1fr) / 36px minmax(0, 1fr); margin-right: 32px; }
.corner { border-right: 2px dotted #6a6a6a; border-bottom: 2px dotted #6a6a6a; background: #505050; }
.ruler-x { display: flex; overflow: hidden; padding-left: 1px; border-bottom: 2px solid #777; color: #a2a2a2; }
.ruler-x span {
  flex: none; width: var(--step); padding: 6px 0 0 4px; border-left: 2px solid #6a6a6a;
  background:
    linear-gradient(#6a6a6a, #6a6a6a) 23% 100% / 2px 6px no-repeat,
    linear-gradient(#6a6a6a, #6a6a6a) 49% 100% / 2px 10px no-repeat,
    linear-gradient(#6a6a6a, #6a6a6a) 75% 100% / 2px 6px no-repeat;
}
.ruler-y { overflow: hidden; border-right: 2px solid #777; color: #a2a2a2; font-size: 20px; line-height: 18px; }
.track { margin-top: -4px; }
.ruler-y span {
  display: block; height: var(--step); padding: 2px 20px 0 0; border-top: 2px solid #6a6a6a; word-break: break-all; text-align: center;
  background:
    linear-gradient(#6a6a6a, #6a6a6a) 100% 23% / 6px 2px no-repeat,
    linear-gradient(#6a6a6a, #6a6a6a) 100% 49% / 10px 2px no-repeat,
    linear-gradient(#6a6a6a, #6a6a6a) 100% 75% / 6px 2px no-repeat;
}
.ruler-y .k { font-size: 16px; line-height: 14px; padding: 1px 21px 0 1px; }
.canvas { display: flex; align-items: center; justify-content: center; background: #282828; border: solid #000; border-width: 2px 2px 0 0; }
.artboard { width: 827px; height: 1170px; background: #f4e843; }
.doc-foot { flex: none; height: 32px; display: flex; align-items: center; color: #ccc; }
.zoom { align-self: stretch; width: 120px; padding: 2px 0 0 24px; background: var(--bar); border-top: 2px solid var(--edge); color: #eee; }
.info { align-self: stretch; width: 336px; padding: 2px 0 0 75px; border-top: 2px solid #404040; background: #4f4f4f; }
.doc-foot button { align-self: stretch; width: 32px; display: flex; align-items: center; padding-left: 10px; border: solid #404040; border-width: 2px 2px 0 0; background: #4f4f4f; }

/* panels */
.right { display: grid; grid-template: 22px minmax(0, 1fr) / 74px minmax(0, 1fr); gap: 2px 6px; min-height: 0; }
.both { grid-column: 1 / -1; justify-content: space-between; padding: 0 13px 0 49px; }
.mini { display: flex; flex-direction: column; gap: 2px; }
.mini-cell { height: 80px; display: flex; flex-direction: column; align-items: center; gap: 16px; padding-top: 6px; background: var(--panel); }
.mini-rest { flex: 1; background: var(--panel); }
.panels { display: flex; flex-direction: column; gap: 6px; min-height: 0; }
.panel { display: flex; flex-direction: column; background: var(--panel); min-height: 0; }
.tabs { flex: none; height: 34px; display: flex; background: linear-gradient(var(--edge), var(--edge)) 0 100% / 100% 2px no-repeat var(--bar); padding-right: 12px; }
.tabs button { height: 32px; padding: 0 14px; border-right: 2px solid var(--edge); color: #aaa; font: 700 20px/30px "Open Sans", sans-serif; }
.tabs .active { height: 34px; padding: 0 15px; background: var(--panel); color: #f2f2f2; }
.burger { margin: 10px 0 0 auto; color: #b0b0b0; }

.color { flex: none; height: 374px; }
.color-body { display: flex; padding: 14px 32px 0 18px; }
.color-body .swatches { width: 72px; margin-top: 6px; }
.ring { outline: 2px solid #8a8a8a; }
.field { position: relative; flex: 1; height: 290px; overflow: hidden; background: linear-gradient(transparent, #000), linear-gradient(90deg, #fff, #ffea00); }
.field i { position: absolute; left: 72%; top: 3px; margin-left: -12px; width: 24px; height: 24px; border: 2px solid #000; border-radius: 50%; }
.hue { position: relative; width: 38px; margin-left: 34px; background: linear-gradient(#f00, #f0f 17%, #00f 33%, #0ff 50%, #0f0 67%, #ff0 83%, #f00); }
.hue svg { position: absolute; left: -20px; top: 80%; }

.libs { flex: none; height: 534px; font-family: "Liberation Sans", sans-serif; font-size: 22px; }
.lib-top { padding: 14px 16px 0; color: #f5f5f5; }
.lib-search { height: 42px; display: flex; align-items: center; gap: 10px; padding-right: 7px; border-bottom: 2px solid #666; }
.lib-search input { flex: 1; height: 30px; appearance: none; }
.lib-search input::placeholder { color: #808080; font-style: italic; opacity: 1; }
.lib-pick { margin-top: 16px; }
.lib-pick select { padding-left: 21px; }
.lib-pick > svg:last-child { right: 10px; top: 10px; width: 16px; height: 16px; }
.lib-view { display: flex; align-items: center; height: 62px; padding-top: 2px; }
.by-type { display: flex; align-items: center; gap: 14px; margin-right: auto; }
.grid-btn { width: 40px; height: 40px; display: flex; align-items: center; justify-content: center; background: var(--edge); border: 2px solid #606060; border-radius: 6px; color: #ddd; }
.list-btn { margin: 0 9px 0 11px; color: #ddd; }
.lib-list { flex: 1; min-height: 0; display: flex; overflow: hidden; background: #4d4d4d; border: solid #464646; border-width: 2px 0; }
.themes { flex: 1; display: flex; flex-direction: column; gap: 8px; padding: 14px 19px 0 16px; }
.theme { flex: none; height: 90px; display: grid; grid-template-columns: repeat(5, 1fr); border: 2px solid var(--edge); border-radius: 8px; overflow: hidden; }
.picked { grid-template-rows: 56px 1fr; padding: 2px; border-color: #6a6a6a; background: #6a6a6a; }
.picked span { grid-column: 1 / -1; padding-left: 4px; line-height: 30px; color: #fff; }
.lib-scroll { width: 33px; padding: 30px 7px; background: #4a4a4a; }
.lib-scroll i { display: block; width: 20px; height: 20px; border-radius: 50%; background: #696969; }
.lib-foot { flex: none; height: 48px; display: flex; align-items: center; gap: 21px; padding: 0 24px 0 22px; }
.size { margin: 0 -14px 0 auto; padding-top: 2px; color: #eee; }
.c-magenta { background: #bc4391; } .c-navy { background: #1a1c38; } .c-royal { background: #20366a; } .c-ink { background: #040a08; } .c-olive { background: #55722a; }
.c-grey { background: #a1a1a1; } .c-white { background: #f3f3f3; } .c-coal { background: #414141; } .c-yellow { background: #fbe82f; } .c-black { background: #0b0b09; }
.c-red { background: #da0e1e; } .c-violet { background: #a15b9f; } .c-sky { background: #2c78bd; } .c-pine { background: #14261b; } .c-forest { background: #183b1b; }

.layers { flex: 1; }
.row { flex: none; height: 56px; display: flex; align-items: center; justify-content: space-between; padding: 0 14px 0 6px; border-bottom: 2px solid #424242; color: #ccc; }
.tabs + .row { height: 64px; padding-top: 8px; padding-right: 12px; }
.kind-lens { width: 22px; height: 22px; margin-left: 15px; }
.filters { display: flex; align-items: center; gap: 26px; }
.toggle { width: 20px; height: 38px; border: 2px solid #606060; border-radius: 10px; background: radial-gradient(circle at 8px 8px, #ddd 8px, var(--well) 9px); }
.lock-row { height: 58px; justify-content: flex-start; gap: 18px; border-bottom: 0; }
.lock { margin: 0 -4px 0 4px; }
.fill { margin: 0 -12px 0 auto; }
.layer-list { flex: 1; min-height: 0; background: linear-gradient(90deg, transparent 448px, #484848 448px) #4d4d4d; border-top: 2px solid #484848; }
.layer { display: flex; height: 84px; padding-right: 30px; border-bottom: 2px solid #464646; }
.eye { width: 61px; background: #515151; }
.layer-main { flex: 1; display: flex; align-items: center; gap: 12px; margin-bottom: 1px; padding-left: 3px; background: #6b6b6b; color: #f0f0f0; }
.layer-foot { flex: none; height: 50px; display: grid; grid-template-columns: repeat(7, 54px); padding-left: 60px; border-top: 2px solid #424242; }
.dim { color: #888; }
.fx { position: relative; font: italic 28px/28px "Open Sans", sans-serif; }
.fx i { position: absolute; right: 8px; bottom: 9px; border: 4px solid transparent; border-top-color: #eee; border-bottom: 0; }

/* dock */
.dock {
  flex: none;
  height: 98px;
  margin: 6px 63px 0 62px;
  padding: 0 5px;
  display: flex;
  border-radius: 10px 10px 0 0;
  background:
    linear-gradient(transparent 30%, rgba(190, 145, 90, .28)),
    linear-gradient(90deg, #70707a 0, #8a7a78 4%, #ad7860 9%, #ab7862 13%, #8c7678 18%, #5f6674 23%, #6f6c74 27%, #a97a66 31%, #a97a66 34%, #7b7276 38%, #5d6472 42%, #656874 46%, #a07868 51%, #a97862 58%, #6b6c76 62%, #5f6674 66%, #9a8080 71%, #a87a68 77%, #837274 82%, #5e6473 87%, #7a7078 91%, #ae7a62 96%, #a87058);
}
.app { position: relative; flex: 1; display: flex; justify-content: center; padding-top: 12px; }
.app > svg { width: 68px; height: 68px; }
.run::after { content: ""; position: absolute; left: 50%; bottom: 4px; width: 8px; height: 8px; margin-left: -4px; border-radius: 50%; background: #120a08; }
.badge { position: absolute; right: 4px; top: 8px; min-width: 28px; height: 28px; border-radius: 14px; background: #f93e30; color: #fff; font-weight: 400; font-size: 18px; line-height: 28px; text-align: center; }
.dock-sep { flex: none; width: 2px; height: 70px; margin: 14px 14px 0 16px; background: #8a6455; }
.win { align-items: center; padding: 0 0 6px; }
.win > .shot { width: 72px; height: revert-layer; }
.win > .mini-badge { position: absolute; right: 4px; bottom: 16px; width: 26px; height: 26px; }
```
